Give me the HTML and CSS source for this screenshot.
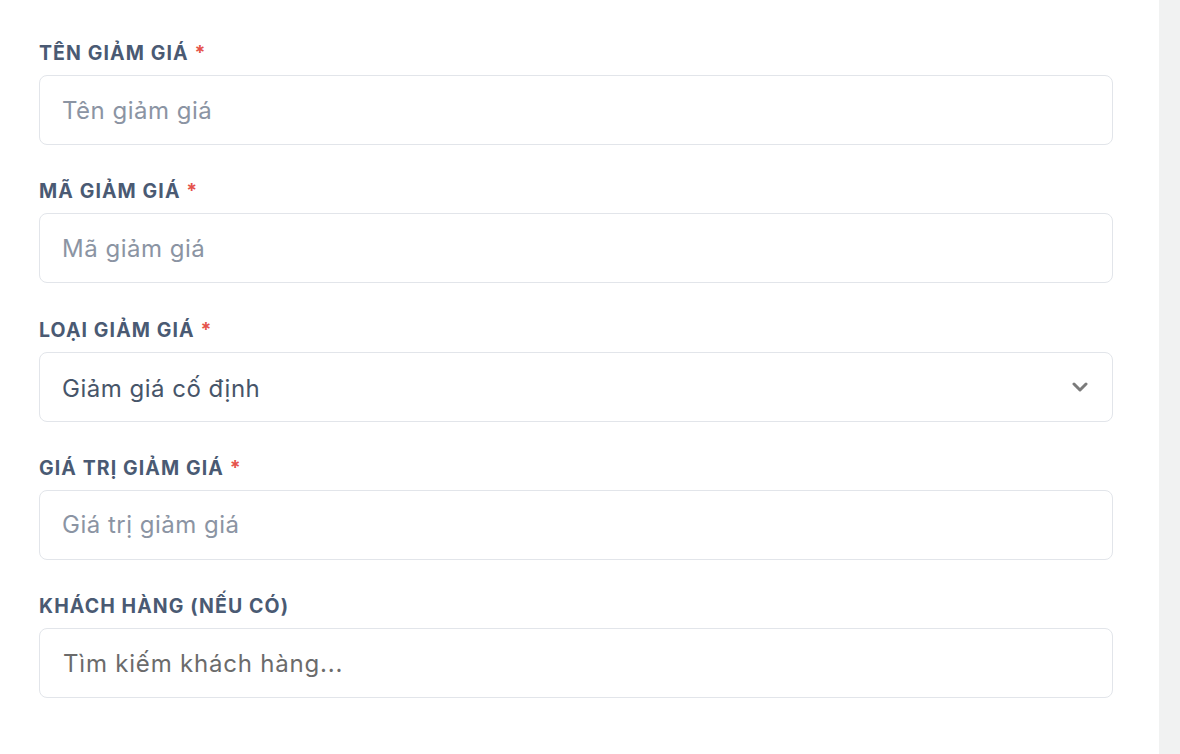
FILE: index.html
```html
<!DOCTYPE html>
<html lang="vi">
<head>
<meta charset="utf-8">
<link rel="stylesheet" href="styles.css">
</head>
<body>
<div class="page">
  <main class="main">
    <form class="form">
      <div class="field">
        <label class="label">Tên giảm giá <span class="req">*</span></label>
        <div class="input"><span class="ph">Tên giảm giá</span></div>
      </div>
      <div class="field">
        <label class="label">Mã giảm giá <span class="req">*</span></label>
        <div class="input"><span class="ph">Mã giảm giá</span></div>
      </div>
      <div class="field">
        <label class="label">Loại giảm giá <span class="req">*</span></label>
        <div class="input select"><span class="val">Giảm giá cố định</span>
          <svg class="chev" width="16" height="10" viewBox="0 0 16 10"><path d="M2 2 L8 8 L14 2" fill="none" stroke="#7b7b7b" stroke-width="3" stroke-linecap="round" stroke-linejoin="round"/></svg>
        </div>
      </div>
      <div class="field">
        <label class="label">Giá trị giảm giá <span class="req">*</span></label>
        <div class="input"><span class="ph">Giá trị giảm giá</span></div>
      </div>
      <div class="field">
        <label class="label">Khách hàng (nếu có)</label>
        <div class="input"><span class="ph dark">Tìm kiếm khách hàng...</span></div>
      </div>
    </form>
  </main>
  <aside class="side"></aside>
</div>
</body>
</html>
```
FILE: styles.css
```css
html, body { margin: 0; padding: 0; }
body { font-family: Inter, "Open Sans", sans-serif; background: #fff; }
.page { display: flex; height: 754px; overflow: hidden; }
.main { width: 1159px; background: #fff; }
.side { flex: 1; background: #f1f2f2; }
.form { padding: 41px 46px 0 39px; display: flex; flex-direction: column; }
.field { display: flex; flex-direction: column; margin-bottom: 34.25px; }
.label { font-size: 19.5px; line-height: 24px; font-weight: 700; text-transform: uppercase; color: #4a5a73; margin-bottom: 10px; letter-spacing: 1.1px; }
.req { color: #e5534b; }
.input { box-sizing: border-box; height: 70px; border: 1px solid #e2e5ea; border-radius: 8px; display: flex; align-items: center; padding: 0 22px; font-size: 24px; letter-spacing: 0.5px; }
.ph { color: #8b94a3; }
.ph.dark { color: #6b6b6b; letter-spacing: 0.8px; padding-left: 1px; }
.val { color: #475569; flex: 1; padding-top: 3px; }
.chev { margin-right: 2px; margin-top: 1px; }
```
